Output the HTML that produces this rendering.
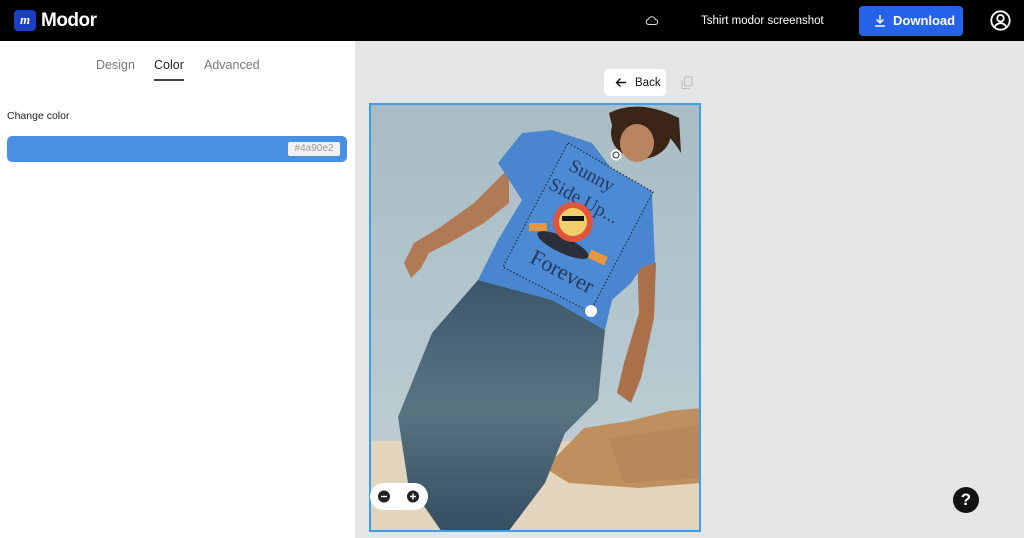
<!DOCTYPE html>
<html><head><meta charset="utf-8"><style>
*{box-sizing:border-box;margin:0;padding:0}
body{width:1024px;height:538px;overflow:hidden;font-family:"Liberation Sans",sans-serif;background:#e5e5e5;position:relative}
.top{position:absolute;left:0;top:0;width:1024px;height:41px;background:#000;color:#fff}
.logo{position:absolute;left:14px;top:10px;width:22px;height:21px;background:#1a3fc4;border-radius:4px;color:#fff;font:italic bold 13px "Liberation Serif",serif;text-align:center;line-height:20px}
.brand{position:absolute;left:41px;top:10px;font-size:19px;font-weight:bold;letter-spacing:-0.5px}
.fname{position:absolute;left:701px;top:15px;font-size:11.5px}
.dl{position:absolute;left:859px;top:6px;width:104px;height:30px;background:#2563eb;border-radius:4px;font-size:13px;font-weight:bold;line-height:30px;padding-left:34px}
.left{position:absolute;left:0;top:41px;width:355px;height:497px;background:#fff}
.tab{position:absolute;top:17px;font-size:12.5px;color:#777}
.lbl{position:absolute;left:7px;top:69px;font-size:10.5px;color:#222}
.bar{position:absolute;left:7px;top:95px;width:340px;height:26px;background:#4a90e2;border-radius:5px}
.hex{position:absolute;right:7px;top:6px;height:14px;width:52px;background:#f1f1f1;border-radius:2px;color:#999;font-size:10px;line-height:14px;text-align:center}
.back{position:absolute;left:604px;top:69px;width:62px;height:27px;background:#fff;border-radius:5px;font-size:11.5px;line-height:28px;padding-left:31px;color:#111}
.img{position:absolute;left:369px;top:103px;width:332px;height:429px;border:2px solid #3aa0e8;overflow:hidden}
.zoom{position:absolute;left:370px;top:483px;width:58px;height:27px;background:#fff;border-radius:14px}
.help{position:absolute;left:953px;top:487px;width:26px;height:26px;border-radius:50%;background:#111;color:#fff;font-weight:bold;font-size:17px;text-align:center;line-height:26px}
</style></head><body>
<div class="top">
<div class="logo">m</div><div class="brand">Modor</div>
<svg style="position:absolute;left:645px;top:15px" width="13" height="11" viewBox="0 0 13 11"><path d="M3.5 9.5h6.5a2.5 2.5 0 0 0 .3-5A3.6 3.6 0 0 0 3.4 4.2 2.7 2.7 0 0 0 3.5 9.5z" fill="none" stroke="#ddd" stroke-width="1"/></svg>
<div class="fname">Tshirt modor screenshot</div>
<div class="dl"><svg style="position:absolute;left:15px;top:8px" width="12" height="13" viewBox="0 0 12 13"><path d="M6 1v8M2.5 5.5L6 9l3.5-3.5M1 12h10" stroke="#fff" stroke-width="1.5" fill="none"/></svg>Download</div>
<svg style="position:absolute;left:990px;top:10px" width="21" height="21" viewBox="0 0 21 21"><circle cx="10.5" cy="10.5" r="9.2" fill="none" stroke="#fff" stroke-width="1.8"/><circle cx="10.5" cy="8.3" r="3.3" fill="none" stroke="#fff" stroke-width="1.8"/><path d="M4.5 17c1.5-2.8 3.5-3.8 6-3.8s4.5 1 6 3.8" fill="none" stroke="#fff" stroke-width="1.8"/></svg>
</div>
<div class="left">
<div class="tab" style="left:96px">Design</div>
<div class="tab" style="left:154px;color:#222">Color</div>
<div style="position:absolute;left:154px;top:38px;width:30px;height:2px;background:#444"></div>
<div class="tab" style="left:204px">Advanced</div>
<div class="lbl">Change color</div>
<div class="bar"><div class="hex">#4a90e2</div></div>
</div>
<div class="back"><svg style="position:absolute;left:11px;top:8px" width="12" height="11" viewBox="0 0 12 11"><path d="M11 5.5H1.5M5.5 1.5L1.5 5.5l4 4" stroke="#111" stroke-width="1.4" fill="none"/></svg>Back</div>
<svg style="position:absolute;left:681px;top:76px" width="12" height="14" viewBox="0 0 12 14"><rect x="3.5" y="1" width="7.5" height="9" rx="1" fill="none" stroke="#bbb"/><path d="M1 4v8.5h7.5" fill="none" stroke="#bbb"/></svg>
<div class="img">
<svg width="332" height="429" viewBox="0 0 332 429" style="position:absolute;left:-2px;top:-2px">
<defs><linearGradient id="sky" x1="0" y1="0" x2="0" y2="1"><stop offset="0" stop-color="#a9bcc4"/><stop offset="0.6" stop-color="#b6c8cf"/><stop offset="1" stop-color="#c5d2d6"/></linearGradient>
<linearGradient id="jn" x1="0" y1="0" x2="0" y2="1"><stop offset="0" stop-color="#3b566c"/><stop offset="0.5" stop-color="#5a7482"/><stop offset="1" stop-color="#344e62"/></linearGradient></defs>
<rect width="332" height="429" fill="url(#sky)"/>
<rect y="338" width="332" height="91" fill="#e3d4bd"/>
<polygon points="176,365 215,325 260,318 300,308 332,305 332,380 270,385 200,380" fill="#c08f5e"/>
<polygon points="240,335 332,322 332,375 255,380" fill="#b8875a"/>
<path d="M140,65 L105,100 L70,125 L45,140 L35,160 L42,175 L52,165 L60,150 L80,140 L115,120 L140,100 Z" fill="#b07a54"/>
<path d="M268,150 L270,210 L255,260 L248,290 L262,300 L272,275 L285,215 L287,160 Z" fill="#a9704a"/>
<ellipse cx="272" cy="30" rx="30" ry="26" fill="#3a2518"/>
<ellipse cx="268" cy="40" rx="17" ry="19" fill="#b98560"/>
<path d="M240,10 Q270,-5 310,15 L312,50 Q300,30 285,22 Q260,15 245,30 Z" fill="#3a2518"/>
<polygon points="129,60 153,30 183,27 223,40 249,74 283,90 286,160 273,164 262,180 243,197 236,227 183,197 109,177 129,137 153,97" fill="#4a86d0"/>
<polygon points="199,40 284,89 221,209 134,164" fill="#4d8ad4"/>
<polygon points="199,40 284,89 221,209 134,164" fill="none" stroke="#1f2a40" stroke-width="1.2" stroke-dasharray="1.5,2"/>
<g fill="#23385e" font-family="Liberation Serif,serif">
<text x="220" y="78" font-size="19" transform="rotate(28 220 78)" text-anchor="middle">Sunny</text>
<text x="212" y="103" font-size="19" transform="rotate(28 212 103)" text-anchor="middle">Side Up...</text>
<text x="190" y="175" font-size="22" transform="rotate(28 190 175)" text-anchor="middle">Forever</text>
</g>
<ellipse cx="194" cy="142" rx="28" ry="8" fill="#2a2f3a" transform="rotate(25 194 142)"/>
<circle cx="204" cy="119" r="20" fill="#e0553a"/>
<circle cx="204" cy="119" r="14" fill="#f1cf6a"/>
<rect x="193" y="113" width="22" height="5" fill="#111"/>
<rect x="160" y="120" width="18" height="8" fill="#e59840"/>
<rect x="220" y="150" width="18" height="9" fill="#e59840" transform="rotate(25 229 154)"/>
<polygon points="109,177 183,197 236,227 229,297 196,330 176,380 139,429 73,429 39,380 29,314 63,230" fill="url(#jn)"/>
<circle cx="222" cy="208" r="6" fill="#fff"/>
<circle cx="247" cy="52" r="5.5" fill="#fff"/><circle cx="247" cy="52" r="3" fill="none" stroke="#333" stroke-width="1"/>
</svg>
</div>
<div class="zoom"><svg width="58" height="27" viewBox="0 0 58 27"><circle cx="14" cy="13.5" r="6" fill="#222"/><path d="M11 13.5h6" stroke="#fff" stroke-width="1.4"/><circle cx="43" cy="13.5" r="6" fill="#222"/><path d="M40 13.5h6M43 10.5v6" stroke="#fff" stroke-width="1.4"/></svg></div>
<div class="help">?</div>
</body></html>
